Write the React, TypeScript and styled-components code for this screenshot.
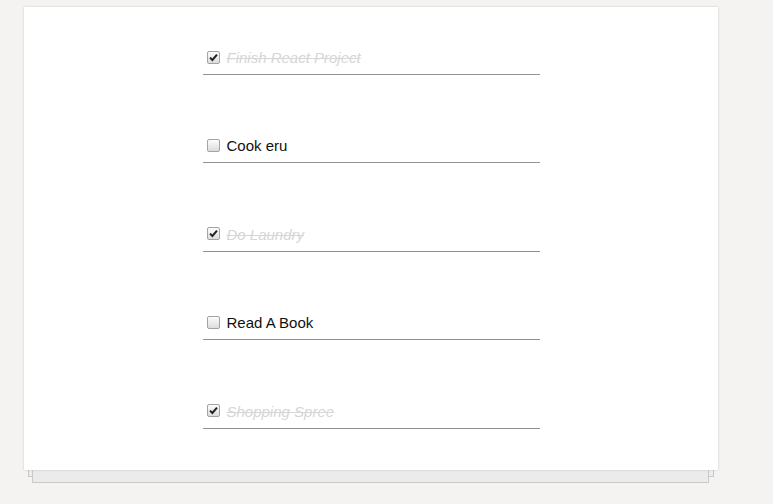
import React, { useState } from 'react';
import styled, { createGlobalStyle } from 'styled-components';

const GlobalStyle = createGlobalStyle`
  body {
    margin: 0;
    background: #f4f3f1;
    font-family: "Liberation Sans", Arial, sans-serif;
  }
`;

const Page = styled.div`
  position: relative;
  z-index: 0;
  padding: 7px 0 34px 24px;
`;

// paper card with two stacked sheets underneath
const Card = styled.div`
  position: relative;
  width: 694px;
  height: 463px;
  box-sizing: border-box;
  background: #fff;
  padding-top: 42px;
  box-shadow: 0 0 2px rgba(0, 0, 0, 0.18);

  &::before,
  &::after {
    content: '';
    position: absolute;
    z-index: -1;
    box-sizing: border-box;
    background: #ececec;
    border: 1px solid #c9c9c9;
  }

  &::before {
    left: 4px;
    right: 4px;
    top: 20px;
    bottom: -7px;
  }

  &::after {
    left: 8px;
    right: 9px;
    top: 30px;
    bottom: -13px;
    background: #ebebeb;
  }
`;

const List = styled.ul`
  list-style: none;
  margin: 0 auto;
  padding: 0;
  width: 337px;
  display: flex;
  flex-direction: column;
  gap: 62.4px;
`;

const Item = styled.li`
  border-bottom: 1px solid #939393;
  padding-bottom: 8px;
`;

const Label = styled.label<{ $done: boolean }>`
  display: flex;
  align-items: center;
  height: 17px;
  font-size: 15px;
  color: ${(p) => (p.$done ? '#d6d6d6' : '#111')};
  font-style: ${(p) => (p.$done ? 'italic' : 'normal')};
  text-decoration: ${(p) => (p.$done ? 'line-through' : 'none')};
  cursor: pointer;
`;

const HiddenInput = styled.input`
  position: absolute;
  opacity: 0;
  width: 0;
  height: 0;
  margin: 0;
`;

const Box = styled.span`
  width: 11px;
  height: 11px;
  margin: -1px 4px 0 4px;
  border: 1px solid #a3a3a3;
  border-radius: 2px;
  background: linear-gradient(#fcfcfc, #dcdcdc);
  display: inline-flex;
  align-items: center;
  justify-content: center;
  flex-shrink: 0;
`;

const Text = styled.span`
  margin-left: 3px;
`;

const initialTodos = [
  { id: 1, text: 'Finish React Project', done: true },
  { id: 2, text: 'Cook eru', done: false },
  { id: 3, text: 'Do Laundry', done: true },
  { id: 4, text: 'Read A Book', done: false },
  { id: 5, text: 'Shopping Spree', done: true },
];

const App: React.FC = () => {
  const [todos, setTodos] = useState(initialTodos);

  const toggle = (id: number) => {
    setTodos(todos.map((t) => (t.id === id ? { ...t, done: !t.done } : t)));
  };

  return (
    <Page>
      <GlobalStyle />
      <Card>
        <List>
          {todos.map((todo) => (
            <Item key={todo.id}>
              <Label $done={todo.done}>
                <HiddenInput type="checkbox" checked={todo.done} onChange={() => toggle(todo.id)} />
                <Box>
                  {todo.done && (
                    <svg width="9" height="9" viewBox="0 0 9 9">
                      <path d="M1 4.6 L3.4 7 L8 1.6" fill="none" stroke="#222" strokeWidth="2" />
                    </svg>
                  )}
                </Box>
                <Text>{todo.text}</Text>
              </Label>
            </Item>
          ))}
        </List>
      </Card>
    </Page>
  );
};

export default App;
